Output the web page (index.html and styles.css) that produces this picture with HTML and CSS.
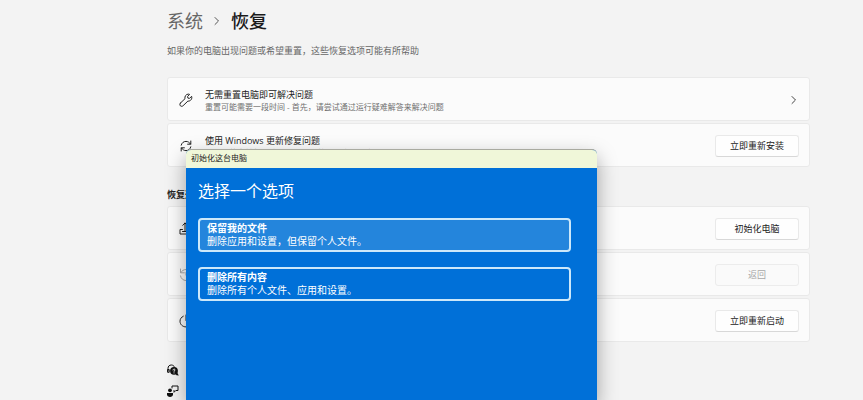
FILE: index.html
```html
<!DOCTYPE html>
<html lang="zh-CN">
<head>
<meta charset="utf-8">
<meta name="viewport" content="width=device-width, initial-scale=1">
<title>恢复</title>
<link rel="stylesheet" href="styles.css">
</head>
<body>
<main class="page">
  <nav class="crumbs">
    <a class="crumb" href="#system">系统</a>
    <svg class="crumb-arrow" viewBox="0 0 8 10"><path d="M2 1.5 5.5 5 2 8.5"/></svg>
    <h1 class="current">恢复</h1>
  </nav>
  <p class="intro">如果你的电脑出现问题或希望重置，这些恢复选项可能有所帮助</p>

  <section class="cards">
    <a class="card" href="#troubleshoot">
      <svg class="icon" viewBox="0 0 14 14"><path d="M1.4 10.1 6 5.7C5.4 3.5 7 1.2 9.2 1.1c.6 0 1 .1 1.4.3L8.6 3.5l.3 1.6 1.6.3 2.1-2.1c.9 2.4-1 5.1-3.7 4.8L4.1 12.7c-.8.8-2 .8-2.7.1-.8-.8-.7-2 0-2.7Z"/></svg>
      <span class="text">
        <span class="title">无需重置电脑即可解决问题</span>
        <span class="desc">重置可能需要一段时间 - 首先，请尝试通过运行疑难解答来解决问题</span>
      </span>
      <svg class="chevron" viewBox="0 0 8 10"><path d="M2 1.5 5.5 5 2 8.5"/></svg>
    </a>
    <div class="card">
      <svg class="icon" viewBox="0 0 14 14"><path d="M2.2 6.2C2.8 3.8 4.6 2.4 7 2.4c1.9 0 3.5 1 4.500 2.600M11.800 2v3.200H8.600M11.800 7.800c-.6 2.400-2.400 3.800-4.800 3.800-1.900 0-3.500-1-4.500-2.600M2.200 12V8.800h3.200"/></svg>
      <div class="text">
        <span class="title">使用 Windows 更新修复问题</span>
        <span class="desc">重新安装当前版本的 Windows (将保留应用、文件和设置)</span>
      </div>
      <button class="btn" type="button">立即重新安装</button>
    </div>
  </section>

  <h2 class="group">恢复选项</h2>

  <section class="cards">
    <div class="card">
      <svg class="icon" viewBox="0 0 14 14"><path d="M3.500 7.500H1v4.500h12V7.500H8.500M3.500 9.500h5M6 9.500V1M3.800 3.300 6 1l2.200 2.300"/></svg>
      <button class="btn" type="button">初始化电脑</button>
    </div>
    <div class="card">
      <svg class="icon muted" viewBox="0 0 14 14"><path d="M1.500 1v3.800h3.800M1.800 4.600C2.900 2.700 4.800 1.500 7 1.500c3.100 0 5.500 2.400 5.500 5.500s-2.400 5.500-5.500 5.500c-2.800 0-5-1.900-5.500-4.600M7 4.500v3h2.500"/></svg>
      <button class="btn" type="button" disabled>返回</button>
    </div>
    <div class="card">
      <svg class="icon" viewBox="0 0 14 14"><path d="M4.300 2.200C2.300 3.200 1 5 1 7.200c0 3.200 2.700 5.700 6 5.700s6-2.500 6-5.700c0-2.200-1.300-4-3.300-5M7 1v5.500"/></svg>
      <button class="btn" type="button">立即重新启动</button>
    </div>
  </section>

  <nav class="links">
    <a class="link" href="#help" aria-label="获取帮助">
      <svg class="link-icon" viewBox="0 0 12 12"><path class="line" d="M1 7V4.500C1 2.300 2.300 1 4.300 1 5.800 1 7 1.800 7.500 3M1 5.500h1.200v2.800H1z"/><circle class="solid" cx="7" cy="6.800" r="3.900"/><path class="solid" d="m8.500 9.800 1.500-1.500 1.800 3.200-2.300-.2z"/><path class="mark" d="M6 6c0-1.300 2-1.300 2 0 0 .7-1 .7-1 1.300M7 8.800v.2"/></svg>
    </a>
    <a class="link" href="#feedback" aria-label="提供反馈">
      <svg class="link-icon" viewBox="0 0 12 12"><circle class="solid" cx="3" cy="5.300" r="1.900"/><path class="solid" d="M0 8h6v1.300C6 11 4.600 12 3 12S0 11 0 9.300z"/><path class="line" d="M5 3V1h6v4.500H8.800L7 7.300V5.500"/></svg>
    </a>
  </nav>
</main>

<div class="dialog" role="dialog" aria-labelledby="dialog-name">
  <div class="titlebar" id="dialog-name">初始化这台电脑</div>
  <div class="dialog-body">
    <h2 class="question">选择一个选项</h2>
    <button class="choice selected" type="button">
      <strong>保留我的文件</strong>
      <span>删除应用和设置，但保留个人文件。</span>
    </button>
    <button class="choice" type="button">
      <strong>删除所有内容</strong>
      <span>删除所有个人文件、应用和设置。</span>
    </button>
  </div>
</div>
</body>
</html>
```
FILE: styles.css
```css
* {
  box-sizing: border-box;
}

body {
  position: relative;
  margin: 0;
  min-height: 100vh;
  overflow: hidden;
  background: #f3f3f3;
  color: #222;
  font: 9px/12px "Open Sans", "Noto Sans CJK SC", sans-serif;
}

button {
  font: inherit;
  color: inherit;
}

a {
  color: inherit;
  text-decoration: none;
}

svg {
  flex: none;
  fill: none;
  stroke: currentColor;
  stroke-linecap: round;
  stroke-linejoin: round;
}

.page {
  padding: 8px 53px 0 167px;
}

.crumbs {
  display: flex;
  align-items: center;
  gap: 10px;
  font-size: 18px;
  line-height: 26px;
}

.crumb {
  color: #666;
}

.crumb-arrow {
  width: 8px;
  height: 10px;
  color: #555;
}

.current {
  margin: 0;
  font-size: inherit;
  font-weight: 500;
  color: #1a1a1a;
}

.intro {
  margin: 11px 0 20px;
  color: #666;
}

.cards {
  display: flex;
  flex-direction: column;
  gap: 2px;
}

.card {
  display: flex;
  align-items: center;
  gap: 12px;
  min-height: 44px;
  padding: 1px 10px 0 11px;
  border: 1px solid #e9e9e9;
  border-radius: 3px;
  background: #fbfbfb;
}

.icon {
  width: 14px;
  height: 14px;
}

.muted {
  color: #aaa;
}

.text {
  display: flex;
  flex-direction: column;
  padding-top: 2px;
}

.desc {
  color: #707070;
  font-size: 8px;
  line-height: 11px;
}

.chevron {
  width: 8px;
  height: 10px;
  margin: 0 1px 0 auto;
  color: #444;
}

.btn {
  width: 84px;
  height: 22px;
  margin-left: auto;
  padding: 0;
  border: 1px solid #e9e9e9;
  border-bottom-color: #d8d8d8;
  border-radius: 3px;
  background: #fefefe;
}

.btn:disabled {
  border-color: #ececec;
  background: #fafafa;
  color: #a8a8a8;
}

.group {
  margin: 22px 0 5px;
  font-size: 9px;
  font-weight: 700;
}

.links {
  display: flex;
  flex-direction: column;
  margin-top: 17px;
}

.link {
  display: flex;
  align-items: center;
  height: 21px;
  color: #111;
}

.link-icon {
  width: 12px;
  height: 12px;
}

.solid {
  fill: currentColor;
  stroke: none;
}

.mark {
  stroke: #fff;
}

.dialog {
  position: absolute;
  top: 149px;
  bottom: 0;
  left: 186px;
  display: flex;
  flex-direction: column;
  width: 411px;
  border-top: 1px solid #a9aaa0;
  border-radius: 5px 5px 0 0;
  background: #0070d8;
  box-shadow: 0 8px 20px rgba(0, 0, 0, 0.35);
  overflow: hidden;
}

.titlebar {
  padding: 2px 5px 4px;
  background: #f0f7d9;
  font-size: 8px;
}

.dialog-body {
  display: flex;
  flex-direction: column;
  padding: 11px 26px 0 12px;
  color: #fff;
}

.question {
  margin: 0 0 15px;
  font-size: 16px;
  font-weight: 400;
  line-height: 24px;
}

.choice {
  display: flex;
  flex-direction: column;
  justify-content: center;
  height: 34px;
  margin-bottom: 15px;
  padding: 0 7px;
  border: 2px solid #cce8fa;
  border-radius: 4px;
  background: none;
  font-size: 10px;
  line-height: 13px;
  text-align: left;
}

.selected {
  background: #2485dc;
}
```
